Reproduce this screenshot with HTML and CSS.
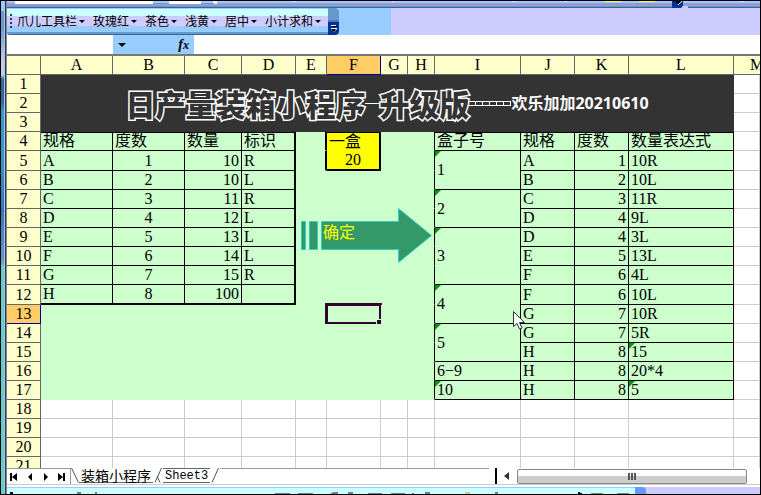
FILE: index.html
```
<!DOCTYPE html>
<html lang="zh-CN">
<head>
<meta charset="utf-8">
<title>装箱小程序</title>
<link rel="stylesheet" href="styles.css">
</head>
<body>
<div class="window">
  <div class="rail"></div>
  <div class="main">
    <div class="upper">
      <svg class="upper-art" width="753" height="7" aria-hidden="true">
        <path fill="#9cf" d="M0 0h753v2H0z"/><path fill="#99c" d="M0 2h753v3H0z"/><path fill="#69c" d="M0 5h753v1H0z"/><path fill="#369" d="M0 6h753v1H0z"/>
        <path fill="#fff" d="M8 0h138v3H8zM162 0h32v3h-32zM206 0h4v3h-4zM287 0h1v1h-1zM385 0h1v1h-1zM506 0h1v1h-1zM558 0h1v1h-1zM735 0h1v1h-1z"/>
        <path fill="#69c" d="M146 2h13v1h-13zM194 2h13v1h-13z"/>
        <path fill="#ff3" d="M598 0h16v1h-16zM632 0h16v1h-16z"/>
        <path fill="#039" d="M665 0h11v5l-2 2h-9z"/><path fill="#ccf" d="M676 5h5v2h-7z"/><path fill="#000" d="M668 0h7l-3 4z"/><path fill="none" stroke="#fff" d="M671 4l4-4"/>
      </svg>
    </div>
    <div class="toolrow">
      <div class="toolbar">
        <span class="grip"></span>
        <button>爪儿工具栏</button>
        <button>玫瑰红</button>
        <button>茶色</button>
        <button>浅黄</button>
        <button>居中</button>
        <button>小计求和</button>
      </div>
      <button class="cap" aria-label="工具栏选项"><svg width="11" height="27"><path fill="#fff" d="M3 17h5v1H3zM3 20h6v1l-3 3-3-3z"/><path fill="#000" d="M4 18h5v1H4zM3 21h5l-2 3z"/></svg></button>
      <span class="dock"></span>
    </div>
    <div class="formula">
      <input class="namebox" aria-label="名称框">
      <div class="fxbar"><button class="drop" aria-label="名称"></button><button class="fx" aria-label="插入函数">f<span>x</span></button></div>
      <input class="edit" aria-label="编辑栏">
    </div>
    <div class="sheet">
      <table>
        <colgroup><col class="c34"><col class="c72"><col class="c72"><col class="c57"><col class="c54"><col class="c31"><col class="c54"><col class="c27"><col class="c27"><col class="c86"><col class="c54"><col class="c54"><col class="c105"><col></colgroup>
        <thead><tr><th></th><th>A</th><th>B</th><th>C</th><th>D</th><th>E</th><th class="on">F</th><th>G</th><th>H</th><th>I</th><th>J</th><th>K</th><th>L</th><th class="m">M</th></tr></thead>
        <tbody>
        <tr><th>1</th><td class="title" colspan="12" rowspan="3"><div class="banner"><span class="big">日产量装箱小程序</span><span class="rule"></span><span class="big">升级版</span><span class="dashes"><i></i><i></i><i></i><i></i><i></i><i></i></span><span class="author">欢乐加加20210610</span></div></td><td></td></tr>
        <tr><th>2</th><td></td></tr>
        <tr><th>3</th><td></td></tr>
        <tr><th>4</th><td class="g t">规格</td><td class="g t">度数</td><td class="g t">数量</td><td class="g t r">标识</td><td class="p e"></td><td class="y t">一盒</td><td class="p"></td><td class="p k"></td><td class="g n">盒子号</td><td class="g n">规格</td><td class="g n">度数</td><td class="g n">数量表达式</td><td></td></tr>
        <tr class="tall"><th>5</th><td class="g">A</td><td class="g mid">1</td><td class="g num">10</td><td class="g r">R</td><td class="p e"></td><td class="y mid b">20</td><td class="p"></td><td class="p k"></td><td class="g flag" rowspan="2">1</td><td class="g">A</td><td class="g num">1</td><td class="g">10R</td><td></td></tr>
        <tr><th>6</th><td class="g">B</td><td class="g mid">2</td><td class="g num">10</td><td class="g r">L</td><td class="p"></td><td class="p"></td><td class="p"></td><td class="p k"></td><td class="g">B</td><td class="g num">2</td><td class="g">10L</td><td></td></tr>
        <tr><th>7</th><td class="g">C</td><td class="g mid">3</td><td class="g num">11</td><td class="g r">R</td><td class="p"></td><td class="p"></td><td class="p"></td><td class="p k"></td><td class="g flag" rowspan="2">2</td><td class="g">C</td><td class="g num">3</td><td class="g">11R</td><td></td></tr>
        <tr><th>8</th><td class="g">D</td><td class="g mid">4</td><td class="g num">12</td><td class="g r">L</td><td class="p"></td><td class="p"></td><td class="p"></td><td class="p k"></td><td class="g">D</td><td class="g num">4</td><td class="g">9L</td><td></td></tr>
        <tr><th>9</th><td class="g">E</td><td class="g mid">5</td><td class="g num">13</td><td class="g r">L</td><td class="p"></td><td class="p"></td><td class="p"></td><td class="p k"></td><td class="g flag" rowspan="3">3</td><td class="g">D</td><td class="g num">4</td><td class="g">3L</td><td></td></tr>
        <tr><th>10</th><td class="g">F</td><td class="g mid">6</td><td class="g num">14</td><td class="g r">L</td><td class="p"></td><td class="p"></td><td class="p"></td><td class="p k"></td><td class="g">E</td><td class="g num">5</td><td class="g">13L</td><td></td></tr>
        <tr><th>11</th><td class="g">G</td><td class="g mid">7</td><td class="g num">15</td><td class="g r">R</td><td class="p"></td><td class="p"></td><td class="p"></td><td class="p k"></td><td class="g">F</td><td class="g num">6</td><td class="g">4L</td><td></td></tr>
        <tr class="tall"><th>12</th><td class="g b">H</td><td class="g mid b">8</td><td class="g num b">100</td><td class="g r b"></td><td class="p"></td><td class="p"></td><td class="p"></td><td class="p k"></td><td class="g flag" rowspan="2">4</td><td class="g">F</td><td class="g num">6</td><td class="g">10L</td><td></td></tr>
        <tr><th class="on">13</th><td class="p"></td><td class="p"></td><td class="p"></td><td class="p"></td><td class="p"></td><td class="p sel"></td><td class="p"></td><td class="p k"></td><td class="g">G</td><td class="g num">7</td><td class="g">10R</td><td></td></tr>
        <tr><th>14</th><td class="p"></td><td class="p"></td><td class="p"></td><td class="p"></td><td class="p"></td><td class="p"></td><td class="p"></td><td class="p k"></td><td class="g flag" rowspan="2">5</td><td class="g">G</td><td class="g num">7</td><td class="g">5R</td><td></td></tr>
        <tr><th>15</th><td class="p"></td><td class="p"></td><td class="p"></td><td class="p"></td><td class="p"></td><td class="p"></td><td class="p"></td><td class="p k"></td><td class="g">H</td><td class="g num">8</td><td class="g flag">15</td><td></td></tr>
        <tr><th>16</th><td class="p"></td><td class="p"></td><td class="p"></td><td class="p"></td><td class="p"></td><td class="p"></td><td class="p"></td><td class="p k"></td><td class="g">6−9</td><td class="g">H</td><td class="g num">8</td><td class="g">20*4</td><td></td></tr>
        <tr><th>17</th><td class="p"></td><td class="p"></td><td class="p"></td><td class="p"></td><td class="p"></td><td class="p"></td><td class="p"></td><td class="p k"></td><td class="g flag">10</td><td class="g">H</td><td class="g num">8</td><td class="g flag">5</td><td></td></tr>
        <tr><th>18</th><td></td><td></td><td></td><td></td><td></td><td></td><td></td><td></td><td></td><td></td><td></td><td></td><td></td></tr>
        <tr><th>19</th><td></td><td></td><td></td><td></td><td></td><td></td><td></td><td></td><td></td><td></td><td></td><td></td><td></td></tr>
        <tr><th>20</th><td></td><td></td><td></td><td></td><td></td><td></td><td></td><td></td><td></td><td></td><td></td><td></td><td></td></tr>
        <tr><th>21</th><td></td><td></td><td></td><td></td><td></td><td></td><td></td><td></td><td></td><td></td><td></td><td></td><td></td></tr>
        </tbody>
      </table>
      <button class="arrow">
        <svg width="132" height="56" aria-hidden="true"><g fill="#396" stroke="#3cc"><path d="M.5 13.5h4v28h-4zM8.500 13.500h8v28h-8zM20.500 13.500h77v-13l33 27-33 27v-13h-77z"/></g></svg>
        <span>确定</span>
      </button>
      <svg class="pointer" width="12" height="19" aria-hidden="true"><path fill="#fff" stroke="#333" d="M.5.5v15l3.500-3 2.500 5.500 2.500-1-2.500-5.500h5z"/></svg>
    </div>
    <div class="tabs">
      <div class="nav">
        <button aria-label="第一张"><svg width="8" height="8"><path d="M0 0h2v8H0zM7 0v8L2 4z"/></svg></button>
        <button aria-label="上一张"><svg width="8" height="8"><path d="M6 0v8L2 4z"/></svg></button>
        <button aria-label="下一张"><svg width="8" height="8"><path d="M2 0v8l4-4z"/></svg></button>
        <button aria-label="最后一张"><svg width="8" height="8"><path d="M0 0v8l5-4zM5 0h2v8H5z"/></svg></button>
      </div>
      <svg class="edge" width="8" height="15"><path d="M.5 0l7 14.500"/></svg>
      <a class="tab active" href="#sheet1">装箱小程序</a>
      <svg class="edge" width="10" height="15"><path d="M8.500 0L2 14.500M4 8l3 6.500"/></svg>
      <a class="tab" href="#sheet3">Sheet3</a>
      <svg class="edge" width="10" height="15"><path d="M8.500 0L2 14.500"/></svg>
      <span class="fill"></span>
      <span class="split"></span>
      <button class="left" aria-label="向左滚动"><svg width="8" height="8"><path fill="#333" d="M6 0v8L1 4z"/></svg></button>
      <div class="track"><div class="thumb"><i></i><i></i><i></i></div></div>
    </div>
    <div class="lower">
      <div class="lowbar"><svg width="628" height="2" aria-hidden="true"><path fill="#006" d="M3 0h3v2H3zM571 0h2v1h2v1h-4z"/><path fill="#779" d="M70 0h4v2h-4zM88 0h2v2h-2zM268 1h15v1h-15zM291 1h15v1h-15zM326 0h5v2h-8zM341 0h5v2h-5zM361 1h14v1h-14zM384 1h14v1h-14zM405 1h2v1h-2zM418 0h5v2h-5zM488 0h3v2h-3z"/><path fill="#cc9" d="M458 0h5v2h-5z"/><path fill="#7a8a70" d="M584 1h12v1h-12zM610 1h12v1h-12z"/></svg></div>
      <span class="lowcap"></span>
    </div>
  </div>
</div>
</body>
</html>
```
FILE: styles.css
```
* { box-sizing: border-box; }
body { margin: 0; background: #fff; overflow: hidden; color: #000; font: 16px/18px "Liberation Serif", "Noto Sans CJK SC", serif; }
button { border: 0; padding: 0; margin: 0; background: none; font: inherit; color: inherit; }
input { border: 0; padding: 0; margin: 0; min-width: 0; background: #fff; outline: 0; }
svg { display: block; flex: none; }

.window { display: flex; height: 100vh; border: 1px solid #000; }
.rail { flex: 0 0 6px; border-right: 1px solid #888; background: linear-gradient(90deg, transparent 0 3px, #9cc 3px 4px, #336 4px), linear-gradient(#9cf 0 10px, #69c 10px 26px, #c9c9e8 60px 74px, #369 78px 100px, #39c 110px 150px, #37b 210px, #69c 260px, #6cc 266px); }
.main { flex: 1; min-width: 0; display: flex; flex-direction: column; }

.upper { flex: 0 0 7px; overflow: hidden; background: #99c; }
.toolrow { flex: 0 0 27px; display: flex; background: #ccf; }
.toolbar { flex: 0 0 321px; display: flex; align-items: center; gap: 8px; padding: 0 0 1px 3px; border-radius: 3px 0 0 3px; background: linear-gradient(#9cf 0 1px, #cff 1px 8px, #ccf 8px 18px, #9cf 18px 24px, #69c 24px 26px, #369 26px); font: 12px/18px "Noto Sans CJK SC", sans-serif; }
.toolbar button { display: flex; align-items: center; gap: 2px; white-space: nowrap; }
.toolbar button::after { content: ""; border: 3px solid transparent; border-top-color: #000; border-bottom: 0; }
.grip { width: 2px; height: 14px; margin-right: -3px; background: repeating-linear-gradient(#336 0 2px, transparent 2px 4px); }
.cap { flex: none; border-radius: 0 4px 4px 0; background: linear-gradient(#69c 0 12px, #66c 12px 14px, #039 14px); }
.dock { width: 52px; background: #9cf; }

.formula { flex: 0 0 19px; display: flex; }
.namebox { flex: 0 0 106px; }
.fxbar { flex: 0 0 81px; display: flex; justify-content: space-between; align-items: center; padding: 0 5px; background: #9cf; }
.drop { border: 4px solid transparent; border-top-color: #000; border-bottom: 0; }
.fx { font: italic bold 14px/18px "Liberation Serif", serif; }
.fx span { font-size: 12px; }
.edit { flex: 1; }

.sheet { flex: 1; min-height: 0; position: relative; overflow: hidden; border-top: 2px solid #777; }
table { width: 100%; table-layout: fixed; border-collapse: separate; border-spacing: 0; }
.c34 { width: 34px; } .c72 { width: 72px; } .c57 { width: 57px; } .c54 { width: 54px; }
.c31 { width: 31px; } .c27 { width: 27px; } .c86 { width: 86px; } .c105 { width: 105px; }
tr { height: 19px; }
.tall { height: 20px; }
th, td { padding: 0 2px; border: 0 solid #ccc; border-width: 0 1px 1px 0; font-weight: normal; line-height: 18px; white-space: nowrap; overflow: hidden; }
th { padding: 0; background: #ffc; border-color: #666; }
th.on { background: #fc6; border-color: #009; }
th.m { padding-left: 16px; border-right: 0; text-align: left; }
td { text-align: left; vertical-align: middle; position: relative; }
td.p { background: #cfc; border-color: #cfc; }
td.k { border-right-color: #000; }
tr:nth-child(n+13) td.k { border-right-color: #000; }
td.g { background: #cfc; border-color: #000; }
td.y { background: #ff0; border: 0 solid #000; border-right-width: 2px; }
td.e { border-right: 2px solid #000; }
td.t { box-shadow: inset 0 1px #000; }
td.n { box-shadow: inset 0 1px #000; }
td.r { border-right-width: 2px; }
td.b { border-bottom-width: 2px; }
td.mid { text-align: center; }
td.num { text-align: right; }
td.flag::before { content: ""; position: absolute; left: 0; top: 0; border: 3px solid #090; border-right-color: transparent; border-bottom-color: transparent; }
td.sel { overflow: visible; }
td.sel::before { content: ""; position: absolute; inset: -2px; border: 3px solid #303; }
td.sel::after { content: ""; position: absolute; right: -3px; bottom: -3px; width: 6px; height: 6px; background: #303; border: solid #cfc; border-width: 1px 0 0 1px; }

td.title { background: #333; border-color: #333; }
.banner { display: flex; align-items: center; justify-content: center; color: #333; }
.big { font: 900 30px/36px "Noto Sans CJK SC", sans-serif; -webkit-text-stroke: 3px #fff; paint-order: stroke fill; }
.rule { width: 14px; height: 1px; background: #fff; }
.dashes { display: flex; }
.dashes i { width: 7px; height: 5px; border: 1px solid #fff; border-left: 0; }
.author { color: #fff; font: bold 16px/20px "Open Sans", "Noto Sans CJK SC", sans-serif; }

.arrow { position: absolute; left: 294px; top: 152px; color: #ff0; }
.arrow span { position: absolute; left: 22px; top: 16px; }
.pointer { position: absolute; left: 506px; top: 255px; }

.tabs { flex: 0 0 17px; display: flex; border-bottom: 1px solid #ccc; }
.nav { flex: 0 0 64px; display: flex; align-items: center; justify-content: space-between; padding: 0 4px 0 3px; border-top: 1px solid #999; border-right: 1px solid #999; }
.edge { fill: none; stroke: #555; }
.tab { padding: 0 2px; height: 15px; border: 1px solid #666; border-width: 1px 0; color: #000; text-decoration: none; font: 12px/14px "Liberation Mono", monospace; }
.tab.active { border-top-width: 0; border-bottom-width: 1px; font: 14px/14px "Noto Sans CJK SC", sans-serif; }
.fill { flex: 1; border-top: 1px solid #999; margin-right: 6px; }
.split { width: 2px; background: #000; }
.left { padding: 3px 6px; }
.track { flex: 0 0 243px; }
.thumb { width: 230px; height: 15px; margin-top: 1px; display: flex; align-items: center; justify-content: center; gap: 1px; border: 1px solid #888; border-radius: 2px; background: linear-gradient(#fff 0 6px, #ccc 6px); }
.thumb i { width: 2px; height: 7px; background: #555; }

.lower { flex: 0 0 9px; display: flex; border-top: 2px solid #fff; background: #ccf; }
.lowbar { flex: 0 0 628px; display: flex; align-items: flex-end; background: linear-gradient(#9cf 0 1px, #cff 1px); }
.lowcap { width: 11px; border-radius: 0 4px 0 0; background: #69f; }
```
